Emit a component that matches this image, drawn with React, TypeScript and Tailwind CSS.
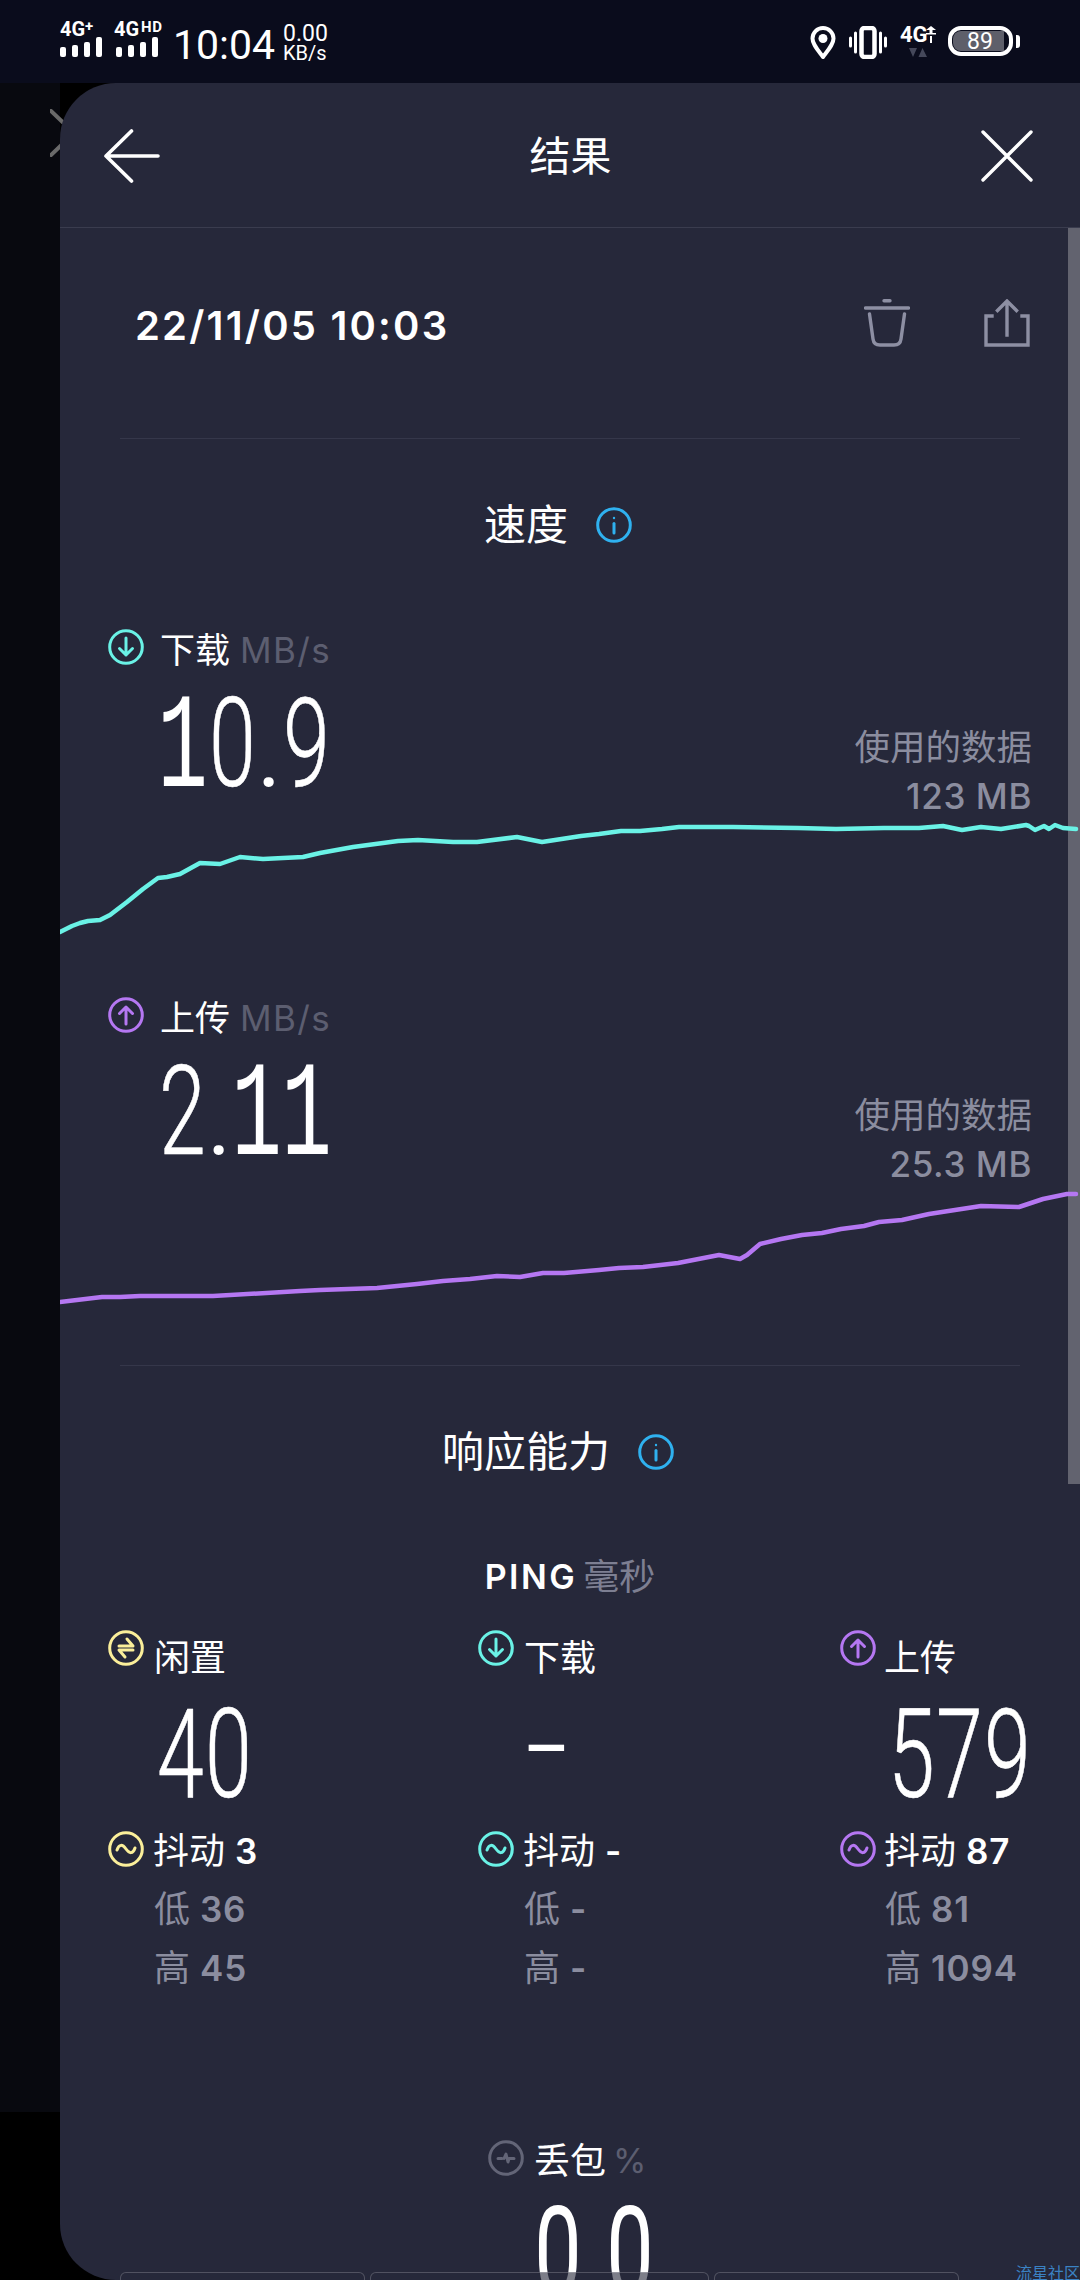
import React from "react";

const TEAL = "#6af2e6";
const PURPLE = "#b577f2";
const YELLOW = "#fbef9a";
const BLUE = "#2fb1ef";
const LOSS = "#636577";

const DL = "60,932 72,926 80,923 88,921 100,920 110,915 127,902 143,889 158,878 167,877 180,874 200,863 220,864 240,857 263,859 303,857 320,853 353,847 398,841 418,840 453,842 477,842 517,837 542,842 581,836 599,834 621,831 640,831 662,829 679,827 733,827 798,828 836,829 884,828 919,828 943,826 962,830 981,827 1001,829 1026,825 1029,826 1035,830 1044,826 1049,829 1055,825 1063,828 1076,829";
const UL = "60,1302 102,1297 120,1297 140,1296 213,1296 300,1291 320,1290 377,1288 417,1284 443,1281 470,1279 497,1276 520,1277 543,1273 564,1273 599,1270 619,1268 643,1267 678,1263 719,1255 740,1259 747,1255 760,1244 781,1239 802,1235 822,1233 841,1229 864,1226 879,1222 902,1220 929,1214 981,1206 1019,1207 1043,1199 1067,1194 1076,1194";

function Circle({ color, children }: { color: string; children: React.ReactNode }) {
  return (
    <svg width="36" height="36" viewBox="0 0 36 36" fill="none" stroke={color} strokeWidth="3" strokeLinecap="round" strokeLinejoin="round" className="shrink-0 block">
      <circle cx="18" cy="18" r="16.300" />
      {children}
    </svg>
  );
}
const DownI = () => <Circle color={TEAL}><path d="M18 9V26M11.500 19.500 18 26 24.500 19.500" /></Circle>;
const UpI = () => <Circle color={PURPLE}><path d="M18 27V10M11.500 16.500 18 10 24.500 16.500" /></Circle>;
const IdleI = () => <Circle color={YELLOW}><path d="M11 16H25L19 9M25 20H11L17 27" /></Circle>;
const JitterI = ({ color }: { color: string }) => <Circle color={color}><path d="M9 19C11 13 14.500 13 18 18S25 23 27 17" /></Circle>;
const InfoI = () => <Circle color={BLUE}><path d="M18 16.500V26" /><circle cx="18" cy="11" r="1.200" fill={BLUE} stroke="none" /></Circle>;
const LossI = () => <Circle color={LOSS}><path d="M10 18.500H14M16 18.500 18 14 20 22 21 18.500H26" /></Circle>;

function Num({ text, pitch = 50, dot = 24, heavy = false }: { text: string; pitch?: number; dot?: number; heavy?: boolean }) {
  return (
    <div className="flex items-baseline h-[112px] text-white leading-none">
      {text.split("").map((c, i) => {
        if (c === ".")
          return (
            <div key={i} className="flex justify-center shrink-0 font-['Roboto',sans-serif] text-[90px] leading-none" style={{ width: dot }}>
              <span className="shrink-0 font-normal">.</span>
            </div>
          );
        if (c === "-")
          return (
            <div key={i} className="flex justify-center shrink-0 font-['Roboto',sans-serif] text-[124px] leading-none" style={{ width: pitch }}>
              <span className="shrink-0 font-light scale-x-[1.22] -translate-x-[4px] -translate-y-[10px]">-</span>
            </div>
          );
        if (c === "1")
          return (
            <div key={i} className="flex justify-center shrink-0 font-['Liberation_Mono',monospace] text-[135px] leading-none" style={{ width: pitch }}>
              <span className="shrink-0 scale-x-[.62]">1</span>
            </div>
          );
        return (
          <div key={i} className={`flex justify-center shrink-0 font-['Roboto',sans-serif] text-[124px] leading-none ${heavy ? "font-normal" : "font-light [-webkit-text-stroke:0.6px_white]"}`} style={{ width: pitch }}>
            <span className="shrink-0 scale-x-[.68]">{c}</span>
          </div>
        );
      })}
    </div>
  );
}

function Bars() {
  return (
    <div className="flex items-end gap-[6px] h-[20px]">
      <div className="w-[6px] h-[10px] rounded-[2px] bg-white" />
      <div className="w-[6px] h-[12px] rounded-[2px] bg-white" />
      <div className="w-[6px] h-[15px] rounded-[2px] bg-white" />
      <div className="w-[6px] h-[20px] rounded-[2px] bg-white" />
    </div>
  );
}

function StatusBar() {
  return (
    <div className="h-[83px] shrink-0 bg-[#0a0c1c] text-white flex items-start justify-between pl-[60px] pr-[60px] font-['Roboto',sans-serif]">
      <div className="flex items-start">
        <div className="flex flex-col w-[42px] mt-[20px]">
          <div className="h-[17px] flex items-start text-[20px] leading-[19px] font-bold">4G<span className="text-[15px] leading-[12px]">+</span></div>
          <Bars />
        </div>
        <div className="flex flex-col w-[59px] ml-[12px] mt-[20px]">
          <div className="h-[17px] flex items-start text-[20px] leading-[19px] font-bold">4G<span className="text-[15px] leading-[14px] ml-[2px] tracking-[0.5px]">HD</span></div>
          <div className="ml-[2px]"><Bars /></div>
        </div>
        <div className="text-[41px] leading-[48px] mt-[21px] w-[110px]">10:04</div>
        <div className="flex flex-col mt-[23px] text-[23px] leading-[21px]">
          <span>0.00</span>
          <span className="text-[20px] leading-[18px]">KB/s</span>
        </div>
      </div>
      <div className="flex items-start mt-[26px]">
        <svg width="26" height="33" viewBox="0 0 26 33" fill="none" className="block">
          <path d="M13 31C7 23 2.500 18 2.500 12.500A10.500 10.500 0 0 1 23.500 12.500C23.500 18 19 23 13 31Z" stroke="white" strokeWidth="4" strokeLinejoin="round" />
          <circle cx="13" cy="12.500" r="4.500" fill="white" />
        </svg>
        <svg width="38" height="33" viewBox="0 0 38 33" fill="none" className="block ml-[13px]">
          <rect x="12.500" y="2" width="13" height="29" rx="3" stroke="white" strokeWidth="4.500" />
          <path d="M1.500 12V20M6.500 7V26M31.500 7V26M36.500 12V20" stroke="white" strokeWidth="3" strokeLinecap="round" />
        </svg>
        <div className="relative ml-[13px] w-[37px] h-[33px]">
          <div className="text-[22px] leading-[18px] font-bold">4G</div>
          <svg width="12" height="18" viewBox="0 0 12 18" className="absolute left-[25px] top-0" fill="white">
            <path d="M6 0 11 4H7.500V7H11V8.500H1V7H4.500V4H1Z" />
            <rect x="5" y="10" width="2" height="7" />
          </svg>
          <svg width="19" height="10" viewBox="0 0 19 10" className="absolute left-[9px] top-[22px]" fill="#45485a">
            <path d="M0 0H8L4 9ZM9.500 9 13.500 0 18 9Z" />
          </svg>
        </div>
        <div className="ml-[11px] flex items-center">
          <div className="relative w-[65px] h-[30px] border-[4px] border-white rounded-[13px] p-[1px]">
            <div className="w-[51px] h-[20px] rounded-l-[8px] bg-[#5e5f6a]" />
            <div className="absolute inset-0 flex items-center justify-center text-[23px] leading-none pr-[1px]">89</div>
          </div>
          <div className="w-[4px] h-[13px] bg-white rounded-r-[3px] ml-[3px]" />
        </div>
      </div>
    </div>
  );
}

function Speed({ icon, label, num, data, points, vb }: { icon: React.ReactNode; label: string; num: string; data: string; points: string; vb: string }) {
  return (
    <div>
      <div className="flex justify-between pl-[48px] pr-[48px] h-[186px]">
        <div>
          <div className="flex items-start h-[53px]">
            {icon}
            <span className="ml-[16px] -mt-[1px] text-[35px] leading-[44px] text-white">{label}</span>
            <span className="ml-[10px] -mt-[1px] text-[35px] tracking-[1.400px] leading-[44px] text-[#5c5e70]">MB/s</span>
          </div>
          <div className="ml-[49px]"><Num text={num} /></div>
        </div>
        <div className="flex flex-col items-end mt-[97px] text-[#8b8d9f]">
          <span className="text-[35.500px] leading-[44px]">使用的数据</span>
          <span className="text-[35px] tracking-[0.600px] leading-[44px] font-medium mt-[4px]">{data}</span>
        </div>
      </div>
      <svg viewBox={vb} className="block w-[1020px] relative z-10" style={{ height: Number(vb.split(" ")[3]) }} fill="none">
        <polyline points={points} stroke={num === "10.9" ? TEAL : PURPLE} strokeWidth="4.500" strokeLinejoin="round" strokeLinecap="round" />
      </svg>
    </div>
  );
}

function Ping({ icon, jitter, label, num, j, lo, hi, gap, pitch, numMl, textMl, jitterMl }: { icon: React.ReactNode; jitter: string; label: string; num: string; j: string; lo: string; hi: string; gap: string; pitch: number; numMl: string; textMl: string; jitterMl: string }) {
  return (
    <div className="flex flex-col">
      <div className="flex items-start h-[63px]">
        {icon}
        <span className={`${gap} mt-[6px] text-[36px] leading-[44px] text-white`}>{label}</span>
      </div>
      <div className={`${numMl} h-[138px]`}><Num text={num} pitch={pitch} /></div>
      <div className="flex items-start h-[58px]">
        <JitterI color={jitter} />
        <span className={`${jitterMl} text-[36px] leading-[40px] text-white`}>抖动</span>
        <span className="ml-[10px] text-[35px] tracking-[0.8px] leading-[40px] font-semibold text-white">{j}</span>
      </div>
      <div className={`flex ${textMl} h-[59px] items-start text-[#8b8d9f]`}>
        <span className="text-[36px] leading-[40px]">低</span>
        <span className="ml-[10px] text-[35px] tracking-[0.8px] leading-[40px] font-semibold">{lo}</span>
      </div>
      <div className={`flex ${textMl} h-[59px] items-start text-[#8b8d9f]`}>
        <span className="text-[36px] leading-[40px]">高</span>
        <span className="ml-[10px] text-[35px] tracking-[0.8px] leading-[40px] font-semibold">{hi}</span>
      </div>
    </div>
  );
}

export default function App() {
  return (
    <div className="relative w-[1080px] h-[2280px] overflow-hidden bg-black flex flex-col font-['Inter','Noto_Sans_CJK_SC',sans-serif]">
      <StatusBar />
      <div className="flex flex-1 min-h-0">
        <div className="relative w-[60px] shrink-0 h-[2029px] bg-[#08090f]">
          <svg width="30" height="50" viewBox="0 0 30 50" fill="none" stroke="#6a6a6a" strokeWidth="4" strokeLinecap="round" className="absolute left-[50px] top-[26px]">
            <path d="M1 2 24 24 1 46" />
          </svg>
        </div>
        <div className="relative flex-1 bg-[#26283a] rounded-l-[56px] overflow-hidden flex flex-col">
          {/* header */}
          <div className="h-[145px] shrink-0 border-b border-[#3a3c4e] flex items-center justify-between pl-[44px] pr-[47px] pt-[2px]">
            <svg width="56" height="56" viewBox="0 0 56 56" fill="none" stroke="white" strokeWidth="3.600" strokeLinecap="round" strokeLinejoin="round" className="block">
              <path d="M2 28H54M27.500 3 2 28 27.500 53" />
            </svg>
            <span className="text-[41px] leading-[48px] text-white">结果</span>
            <svg width="52" height="52" viewBox="0 0 52 52" fill="none" stroke="white" strokeWidth="3.400" strokeLinecap="round" className="block">
              <path d="M2 2 50 50M50 2 2 50" />
            </svg>
          </div>
          <div className="absolute right-0 top-[145px] w-[12px] h-[1256px] bg-[#62636f]" />

          {/* date */}
          <div className="h-[190px] shrink-0 flex items-center justify-between pl-[75px] pr-[49px] relative">
            <span className="mt-[6px] text-[40px] tracking-[2.200px] leading-[48px] font-semibold text-white">22/11/05 10:03</span>
            <div className="flex items-center gap-[73px]">
              <svg width="46" height="48" viewBox="0 0 46 48" fill="none" stroke="#8d8fa3" strokeWidth="3.400" strokeLinecap="round" strokeLinejoin="round" className="block">
                <path d="M1.500 9H44.500M20 1.800H26M5.500 15 9 40C9.500 44 12 46 16 46H30C34 46 36.500 44 37 40L40.500 15" />
              </svg>
              <svg width="48" height="48" viewBox="0 0 48 48" fill="none" stroke="#8d8fa3" strokeWidth="3.400" strokeLinecap="square" strokeLinejoin="miter" className="block">
                <path d="M9 17H3V46H45V17H39M24 36V3M14.500 11.500 24 2 33.500 11.500" />
              </svg>
            </div>
          </div>
          <div className="mx-[60px] mt-[20px] h-px shrink-0 bg-[#35374a]" />

          {/* speed */}
          <div className="mt-[66px] h-[40px] flex items-center justify-center gap-[28px] pr-[24px] shrink-0">
            <span className="text-[42px] leading-[48px] text-white">速度</span>
            <InfoI />
          </div>
          <div className="mt-[84px] shrink-0">
            <Speed icon={<DownI />} label="下载" num="10.9" data="123 MB" points={DL} vb="60 815 1020 125" />
          </div>
          <div className="mt-[57px] shrink-0">
            <Speed icon={<UpI />} label="上传" num="2.11" data="25.3 MB" points={UL} vb="60 1183 1020 127" />
          </div>
          <div className="mx-[60px] mt-[55px] h-px shrink-0 bg-[#35374a]" />

          {/* responsiveness */}
          <div className="mt-[66px] h-[40px] flex items-center justify-center gap-[28px] pr-[24px] shrink-0">
            <span className="text-[42px] leading-[48px] text-white">响应能力</span>
            <InfoI />
          </div>
          <div className="mt-[88px] h-[34px] flex items-center justify-center gap-[6px] shrink-0">
            <span className="text-[34px] tracking-[2.500px] leading-[40px] font-semibold text-white">PING</span>
            <span className="text-[36px] leading-[40px] text-[#7d7f92]">毫秒</span>
          </div>
          <div className="mt-[36px] grid grid-cols-[370px_362px_1fr] pl-[48px] shrink-0">
            <Ping icon={<IdleI />} jitter={YELLOW} label="闲置" num="40" j="3" lo="36" hi="45" gap="ml-[10px]" pitch={48} numMl="ml-[48px]" textMl="ml-[46px]" jitterMl="ml-[9px]" />
            <Ping icon={<DownI />} jitter={TEAL} label="下载" num="-" j="-" lo="-" hi="-" gap="ml-[10px]" pitch={47} numMl="ml-[49px]" textMl="ml-[46px]" jitterMl="ml-[9px]" />
            <Ping icon={<UpI />} jitter={PURPLE} label="上传" num="579" j="87" lo="81" hi="1094" gap="ml-[8px]" pitch={48} numMl="ml-[47px]" textMl="ml-[45px]" jitterMl="ml-[8px]" />
          </div>

          {/* loss */}
          <div className="mt-[133px] ml-[428px] h-[51px] flex items-start shrink-0">
            <LossI />
            <span className="ml-[10px] -mt-[1px] text-[36px] leading-[44px] text-white">丢包</span>
            <span className="ml-[7px] -mt-[1px] text-[34px] leading-[44px] text-[#5c5e70]">%</span>
          </div>
          <div className="ml-[480px] shrink-0"><Num text="0.0" pitch={36} dot={36} heavy /></div>

          {/* bottom bar */}
          <div className="absolute left-0 right-0 bottom-0 h-[8px] flex pl-[60px] gap-[5px]">
            <div className="w-[245px] rounded-t-[6px] border-t border-x border-white/20 bg-[#26283a]/60" />
            <div className="w-[339px] rounded-t-[6px] border-t border-x border-white/20 bg-[#26283a]/60" />
            <div className="w-[245px] rounded-t-[6px] border-t border-x border-white/20 bg-[#26283a]/60" />
          </div>
          <span className="absolute right-0 -bottom-[3px] text-[16px] leading-[20px] text-[#3b82c4]">流星社区</span>
        </div>
      </div>
    </div>
  );
}
